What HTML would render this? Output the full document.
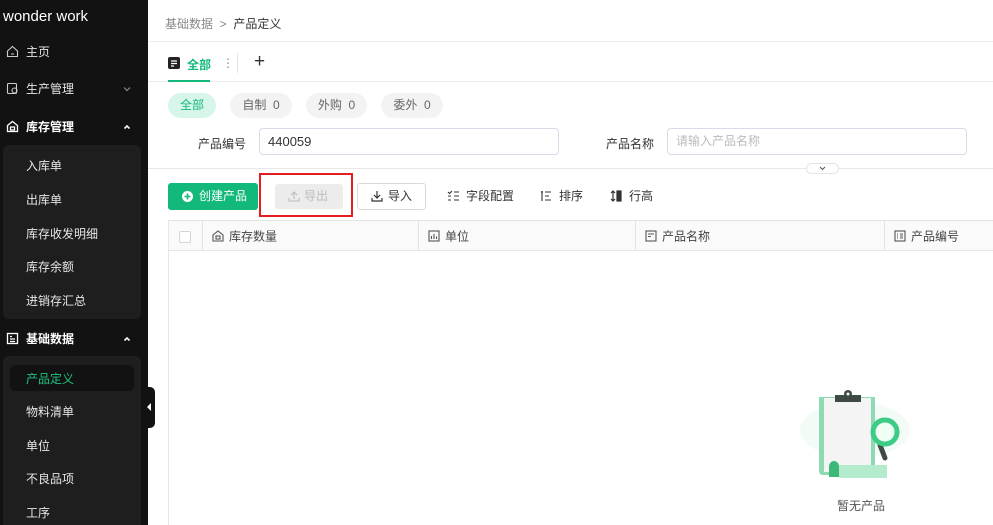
<!DOCTYPE html>
<html><head><meta charset="utf-8"><style>
*{margin:0;padding:0;box-sizing:border-box}
body{width:993px;height:525px;overflow:hidden;background:#fff;font-family:"Liberation Sans","Noto Sans CJK SC",sans-serif;font-size:12px;color:#333;position:relative}
.a{position:absolute}
#sb{left:0;top:0;width:148px;height:525px;background:#121212;color:#ddd;overflow:hidden}
.mi{position:absolute;left:26px;font-size:12px;color:#e6e6e6;line-height:14px}
.grp{position:absolute;left:3px;width:138px;background:#1e1e1e;border-radius:6px}
.ic{position:absolute;left:6px;width:13px;height:13px}
.chev{position:absolute;left:122px;width:10px;height:10px}
.chip{position:absolute;top:93px;height:25px;border-radius:13px;background:#f3f3f3;color:#666;line-height:25px;text-align:center;font-size:12px}
.lbl{position:absolute;font-size:12px;color:#333;top:135px}
.inp{position:absolute;top:128px;height:27px;border:1px solid #d9dbe8;border-radius:4px;padding-left:8px;line-height:25px;font-size:13px}
.tb{position:absolute;top:196px;font-size:12px;color:#333;line-height:1;transform:translateY(-50%)}
.th{position:absolute;top:236px;transform:translateY(-50%);font-size:12px;color:#444}
.vl{position:absolute;top:221px;width:1px;height:30px;background:#e3e3e3}
</style></head><body>
<div id="sb" class="a">
 <div class="a" style="left:3px;top:8px;font-size:15px;color:#fff">wonder work</div>
 <svg class="ic" style="top:45px" viewBox="0 0 13 13" fill="none" stroke="#ccc" stroke-width="1.1"><path d="M1.5 6L6.5 1.5 11.5 6V11.5H1.5Z M5 9h3"/></svg>
 <div class="mi" style="top:45px">主页</div>
 <svg class="ic" style="top:82px" viewBox="0 0 13 13" fill="none" stroke="#ccc" stroke-width="1.1"><rect x="1.5" y="1.5" width="9" height="10" rx="1"/><circle cx="8.5" cy="8.5" r="2.5"/></svg>
 <div class="mi" style="top:82px">生产管理</div>
 <svg class="chev" style="top:84px" viewBox="0 0 10 10" fill="none" stroke="#888" stroke-width="1.2"><path d="M2 3.5l3 3 3-3"/></svg>
 <svg class="ic" style="top:120px" viewBox="0 0 13 13" fill="none" stroke="#fff" stroke-width="1.3"><path d="M1.5 5.5L6.5 1.5 11.5 5.5V11.5H1.5Z"/><rect x="4.5" y="7" width="4" height="3"/></svg>
 <div class="mi" style="top:120px;color:#fff;font-weight:bold">库存管理</div>
 <svg class="chev" style="top:122px" viewBox="0 0 10 10" fill="none" stroke="#fff" stroke-width="1.6"><path d="M2.5 6.5l2.5-2.5 2.5 2.5"/></svg>
 <div class="grp" style="top:145px;height:174px"></div>
 <div class="mi" style="top:159px">入库单</div>
 <div class="mi" style="top:193px">出库单</div>
 <div class="mi" style="top:227px">库存收发明细</div>
 <div class="mi" style="top:260px">库存余额</div>
 <div class="mi" style="top:294px">进销存汇总</div>
 <svg class="ic" style="top:332px" viewBox="0 0 13 13" fill="none" stroke="#fff" stroke-width="1.3"><rect x="1.5" y="1.5" width="10" height="10"/><path d="M4 4.5h2M4 7h5M4 9.5h5"/></svg>
 <div class="mi" style="top:332px;color:#fff;font-weight:bold">基础数据</div>
 <svg class="chev" style="top:334px" viewBox="0 0 10 10" fill="none" stroke="#fff" stroke-width="1.6"><path d="M2.5 6.5l2.5-2.5 2.5 2.5"/></svg>
 <div class="grp" style="top:356px;height:190px"></div>
 <div class="a" style="left:10px;top:365px;width:124px;height:26px;background:#121212;border-radius:5px"></div>
 <div class="mi" style="top:372px;color:#1fc47f">产品定义</div>
 <div class="mi" style="top:405px">物料清单</div>
 <div class="mi" style="top:439px">单位</div>
 <div class="mi" style="top:472px">不良品项</div>
 <div class="mi" style="top:506px">工序</div>
</div>
<div class="a" style="left:145px;top:387px;width:10px;height:41px;background:#121212;border-radius:0 5px 5px 0"></div>
<div class="a" style="left:147px;top:403px;width:0;height:0;border-top:4px solid transparent;border-bottom:4px solid transparent;border-right:4px solid #fff"></div>

<div class="a" style="left:165px;top:15px;color:#888">基础数据 &nbsp;&gt;&nbsp; <span style="color:#333">产品定义</span></div>
<div class="a" style="left:148px;top:41px;width:845px;height:1px;background:#eee"></div>
<svg class="a" style="left:168px;top:57px" width="12" height="12" viewBox="0 0 12 12"><rect width="12" height="12" rx="2" fill="#222"/><path d="M3 4h6M3 6.5h6M3 9h3" stroke="#fff" stroke-width="1.2"/></svg>
<div class="a" style="left:187px;top:56px;color:#12b97a;font-weight:bold;font-size:12px">全部</div>
<div class="a" style="left:222px;top:56px;color:#888">⋮</div>
<div class="a" style="left:237px;top:53px;width:1px;height:20px;background:#e5e5e5"></div>
<div class="a" style="left:254px;top:51px;font-size:19px;color:#333;line-height:22px">+</div>
<div class="a" style="left:148px;top:81px;width:845px;height:1px;background:#ececec"></div>
<div class="a" style="left:168px;top:80px;width:42px;height:2px;background:#12b97a"></div>

<div class="chip" style="left:168px;width:48px;background:#d7f5e8;color:#12b97a">全部</div>
<div class="chip" style="left:230px;width:62px">自制 &nbsp;0</div>
<div class="chip" style="left:306px;width:61px">外购 &nbsp;0</div>
<div class="chip" style="left:381px;width:62px">委外 &nbsp;0</div>

<div class="lbl" style="left:198px">产品编号</div>
<div class="inp" style="left:259px;width:300px;color:#333">440059</div>
<div class="lbl" style="left:606px">产品名称</div>
<div class="inp" style="left:667px;width:300px;color:#bbb;font-size:12px">请输入产品名称</div>
<div class="a" style="left:148px;top:168px;width:845px;height:1px;background:#e8e8e8"></div>
<div class="a" style="left:806px;top:163px;width:33px;height:11px;border:1px solid #e3e3e3;border-radius:6px;background:#fff"></div>
<svg class="a" style="left:819px;top:166px" width="7" height="5" viewBox="0 0 7 5" fill="none" stroke="#555" stroke-width="1"><path d="M1 1l2.5 2.5L6 1"/></svg>

<div class="a" style="left:168px;top:183px;width:90px;height:27px;background:#12b97a;border-radius:3px;color:#fff;line-height:27px;padding-left:31px">创建产品</div>
<svg class="a" style="left:182px;top:191px" width="11" height="11" viewBox="0 0 11 11"><circle cx="5.5" cy="5.5" r="5.5" fill="#fff"/><path d="M5.5 2.5v6M2.5 5.5h6" stroke="#12b97a" stroke-width="1.6"/></svg>
<div class="a" style="left:259px;top:173px;width:94px;height:44px;border:2px solid #e51d1d"></div>
<div class="a" style="left:275px;top:184px;width:68px;height:25px;background:#ececec;border-radius:3px;color:#bbb;line-height:25px;padding-left:29px">导出</div>
<svg class="a" style="left:288px;top:190px" width="12" height="12" viewBox="0 0 12 12" fill="none" stroke="#bbb" stroke-width="1.1"><path d="M6 9V2M3 5l3-3 3 3M1 8v3h10V8"/></svg>
<div class="a" style="left:357px;top:183px;width:69px;height:27px;border:1px solid #d9d9d9;border-radius:3px;line-height:25px;padding-left:30px;color:#333">导入</div>
<svg class="a" style="left:371px;top:190px" width="12" height="12" viewBox="0 0 12 12" fill="none" stroke="#333" stroke-width="1.2"><path d="M6 1v7M3 5l3 3 3-3M1 8v3h10V8"/></svg>
<svg class="a" style="left:447px;top:190px" width="12" height="12" viewBox="0 0 12 12" fill="none" stroke="#333" stroke-width="1.1"><path d="M1 2l1.5 1.5L5 1M7 2h5M1 6h3M7 6h5M1 10h3M7 10h5"/></svg>
<div class="tb" style="left:466px">字段配置</div>
<svg class="a" style="left:540px;top:190px" width="12" height="12" viewBox="0 0 12 12" fill="none" stroke="#333" stroke-width="1.1"><path d="M2 1v10M1 2h2M5 2h6M5 6h4M5 10h6"/></svg>
<div class="tb" style="left:559px">排序</div>
<svg class="a" style="left:610px;top:190px" width="13" height="12" viewBox="0 0 13 12" fill="none" stroke="#333" stroke-width="1.2"><path d="M3 1v10M1 3l2-2 2 2M1 9l2 2 2-2"/><rect x="7" y="1" width="4" height="10" fill="#333"/></svg>
<div class="tb" style="left:629px">行高</div>

<div class="a" style="left:168px;top:220px;width:825px;height:305px;border-left:1px solid #e6e6e6;border-top:1px solid #e3e3e3"></div>
<div class="a" style="left:169px;top:221px;width:824px;height:30px;background:#fafafa;border-bottom:1px solid #e6e6e6"></div>
<div class="a" style="left:179px;top:231px;width:12px;height:12px;border:1px solid #d5d5d5;border-radius:2px;background:#fff"></div>
<div class="vl" style="left:202px"></div>
<div class="vl" style="left:418px"></div>
<div class="vl" style="left:635px"></div>
<div class="vl" style="left:884px"></div>
<svg class="a" style="left:212px;top:230px" width="12" height="12" viewBox="0 0 12 12" fill="none" stroke="#555" stroke-width="1.1"><path d="M1 5L6 1l5 4v6H1Z"/><rect x="4" y="6" width="4" height="3"/></svg>
<div class="th" style="left:229px">库存数量</div>
<svg class="a" style="left:428px;top:230px" width="12" height="12" viewBox="0 0 12 12" fill="none" stroke="#555" stroke-width="1.1"><rect x="1" y="1" width="10" height="10"/><path d="M3.5 9V6M6 9V4M8.5 9V6.5"/></svg>
<div class="th" style="left:445px">单位</div>
<svg class="a" style="left:645px;top:230px" width="12" height="12" viewBox="0 0 12 12" fill="none" stroke="#555" stroke-width="1.1"><rect x="1" y="1" width="10" height="10"/><path d="M3 4h6M3 6.5h3"/></svg>
<div class="th" style="left:662px">产品名称</div>
<svg class="a" style="left:894px;top:230px" width="12" height="12" viewBox="0 0 12 12" fill="none" stroke="#555" stroke-width="1.1"><rect x="1" y="1" width="10" height="10"/><path d="M3 4h1M3 6h1M3 8h1M6 4h3M6 6h3M6 8h3"/></svg>
<div class="th" style="left:911px">产品编号</div>

<svg class="a" style="left:795px;top:385px" width="120" height="100" viewBox="0 0 120 100">
 <ellipse cx="60" cy="45" rx="55" ry="28" fill="#f2fbf5"/>
 <path d="M24 12h56v78H28c-3 0-4-2-4-4Z" fill="#8edbb3"/>
 <rect x="29" y="13" width="47" height="74" fill="#f4f4f4"/>
 <path d="M44 80h48v13H44Z" fill="#b3ebcc"/>
 <path d="M34 92V82c0-8 10-8 10 0v10Z" fill="#3cb878"/>
 <path d="M40 10h26v7H40Z" fill="#3f4a45"/>
 <circle cx="53" cy="9" r="4" fill="#3f4a45"/>
 <circle cx="53" cy="9" r="1.5" fill="#f4f4f4"/>
 <path d="M85 60l5 13" stroke="#3f4a45" stroke-width="5" stroke-linecap="round"/>
 <circle cx="90" cy="47" r="12" fill="#f0fff6" stroke="#3ccc86" stroke-width="5"/>
</svg>
<div class="a" style="left:837px;top:497px;color:#555;font-size:12px">暂无产品</div>
</body></html>
